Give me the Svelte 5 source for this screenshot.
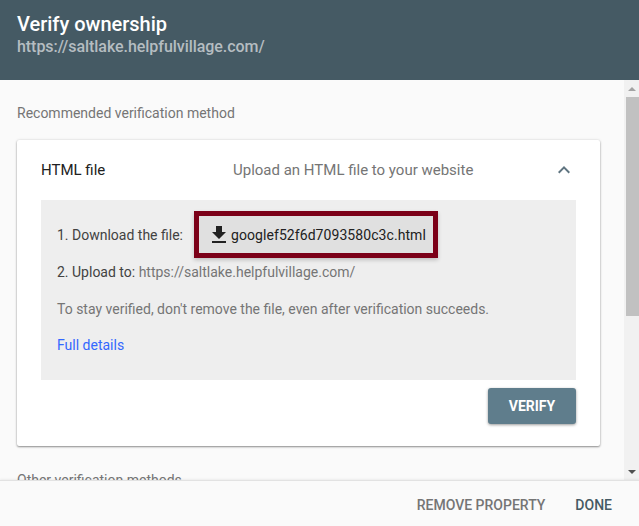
<script>
  const site = 'https://saltlake.helpfulvillage.com/';
  const fileName = 'googlef52f6d7093580c3c.html';
</script>

<div class="dialog">
  <header class="header">
    <h1>Verify ownership</h1>
    <div class="site">{site}</div>
  </header>

  <div class="middle">
    <div class="content">
      <div class="label first">Recommended verification method</div>

      <section class="card">
        <div class="card-head">
          <span class="method">HTML file</span>
          <span class="desc">Upload an HTML file to your website</span>
          <svg class="chevron" width="24" height="24" viewBox="0 0 24 24">
            <path d="M7.41 15.41 12 10.83l4.59 4.58L18 14l-6-6-6 6z" />
          </svg>
        </div>

        <div class="steps">
          <div class="step-download">
            <span>1. Download the file:</span>
            <button class="download">
              <svg width="24" height="24" viewBox="0 0 24 24">
                <path d="M19 9h-4V3H9v6H5l7 7 7-7zM5 18v2h14v-2H5z" />
              </svg>
              {fileName}
            </button>
          </div>
          <div class="step-upload">2. Upload to: <span class="url">{site}</span></div>
          <div class="note">To stay verified, don't remove the file, even after verification succeeds.</div>
          <a class="details" href="#details">Full details</a>
        </div>

        <div class="card-actions">
          <button class="verify">VERIFY</button>
        </div>
      </section>

      <div class="label other">Other verification methods</div>
    </div>

    <div class="scrollbar">
      <div class="arrow up"></div>
      <div class="track"><div class="thumb"></div></div>
      <div class="arrow down"></div>
    </div>
  </div>

  <footer class="footer">
    <button class="text-btn muted">REMOVE PROPERTY</button>
    <button class="text-btn done">DONE</button>
  </footer>
</div>

<style>
  :global(body){ margin:0; }

  .dialog{
    width:639px; height:526px; display:flex; flex-direction:column; overflow:hidden;
    background:#fafafa; font-family:Roboto,"Liberation Sans",sans-serif; color:#212121;
  }

  .header{ height:80px; box-sizing:border-box; flex:none; padding:12px 17px 0; background:#455a64; }
  .header h1{ margin:0; font-size:20px; line-height:24px; font-weight:500; color:#fff; }
  .site{ font-size:16px; line-height:22px; font-weight:500; letter-spacing:-.05px; color:#b5bdc1; }

  .middle{ flex:1; min-height:0; display:flex; }
  .content{ flex:1; min-width:0; overflow:hidden; padding:0 24px 0 17px; }

  .label{ font-size:14px; line-height:20px; color:#757575; }
  .first{ margin-top:23px; }
  .other{ margin-top:24px; }

  .card{
    margin-top:17px; height:306px; box-sizing:border-box; background:#fff; border-radius:2px;
    box-shadow:0 1px 2px rgba(0,0,0,.4), 0 0 3px rgba(0,0,0,.12); padding:0 24px;
  }
  .card-head{ height:60px; display:flex; align-items:center; font-size:15px; }
  .method{ width:192px; color:#212121; }
  .desc{ flex:1; color:#757575; }
  .chevron{ fill:#5f7480; }

  .steps{ height:180px; box-sizing:border-box; background:#eee; padding:11px 16px 0; font-size:14px; color:#424242; }
  .step-download{ display:flex; align-items:center; gap:11px; }
  .download{
    display:flex; align-items:center; gap:2px; height:47px; box-sizing:border-box; padding:0 7px 0 10px;
    border:5px solid #7b0018; background:#e0e0e0; color:#212121;
    font:400 14px Roboto,"Liberation Sans",sans-serif; letter-spacing:.07px; box-shadow:0 2px 4px rgba(0,0,0,.2);
  }
  .download svg{ fill:#212121; flex:none; margin:0 -2px 0 -2px; }
  .step-upload{ margin-top:4px; line-height:20px; }
  .url{ color:#757575; }
  .note{ margin-top:17px; line-height:20px; color:#757575; }
  .details{ display:block; margin-top:16px; line-height:20px; color:#3367ff; text-decoration:none; }

  .card-actions{ display:flex; justify-content:flex-end; margin-top:8px; }
  .verify{
    width:88px; height:36px; border:0; border-radius:3px; background:#5f7d8c; color:#fff;
    font:700 14px Roboto,"Liberation Sans",sans-serif; box-shadow:0 1px 3px rgba(0,0,0,.4);
  }

  .scrollbar{ width:15px; flex:none; display:flex; flex-direction:column; background:#f1f1f1; }
  .arrow{ height:17px; flex:none; display:flex; justify-content:center; align-items:center; }
  .arrow::after{ content:""; border-left:4px solid transparent; border-right:4px solid transparent; }
  .up::after{ border-bottom:4px solid #a3a3a3; }
  .down::after{ border-top:4px solid #505050; }
  .track{ flex:1; padding-left:2px; }
  .thumb{ height:219px; background:#c1c1c1; }

  .footer{
    height:46px; flex:none; box-sizing:border-box; display:flex; justify-content:flex-end; align-items:center;
    gap:30px; padding:2px 27px 0 0; background:#fafafa; border-top:1px solid #e2e2e2;
    box-shadow:0 -1px 2px rgba(0,0,0,.06); position:relative;
  }
  .text-btn{ border:0; padding:0; background:none; font:500 14px Roboto,"Liberation Sans",sans-serif; }
  .muted{ color:#757575; }
  .done{ color:#455a64; }
</style>
